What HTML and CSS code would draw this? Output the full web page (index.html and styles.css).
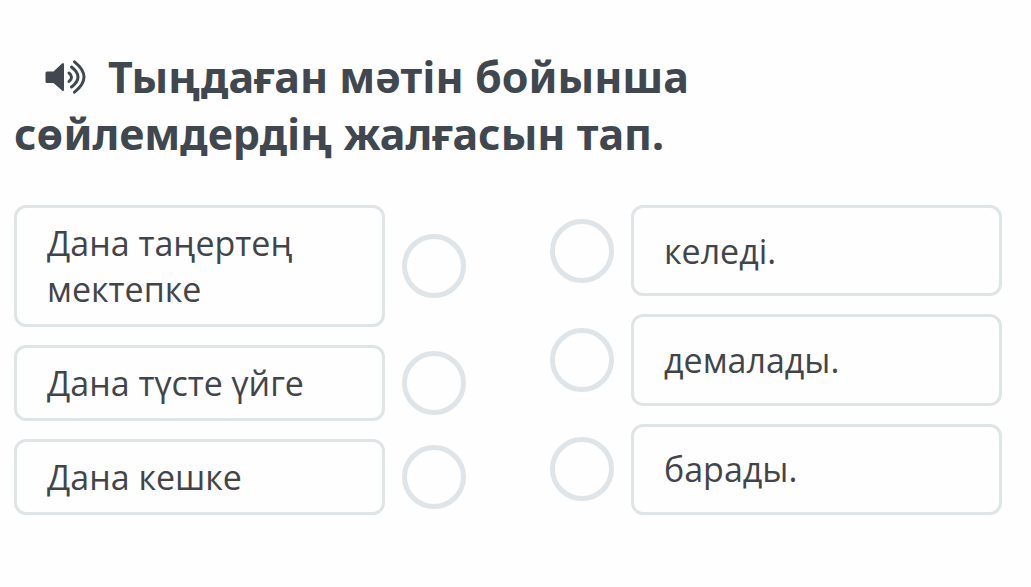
FILE: index.html
```html
<!DOCTYPE html>
<html lang="kk">
<head>
<meta charset="utf-8">
<meta name="viewport" content="width=device-width, initial-scale=1">
<title>Тапсырма</title>
<link rel="stylesheet" href="styles.css">
</head>
<body>
<main class="task">
  <h1 class="task-title"><button class="sound" type="button" aria-label="Тыңдау"><svg class="sound-icon" viewBox="0 0 42 44" aria-hidden="true"><path class="speaker" d="M2 12.500h6.500L17 4.500q2-1.500 2 1v25q0 2.500-2 1L8.500 24H2q-1.500 0-1.500-1.500V14q0-1.500 1.500-1.500z"/><path class="wave" d="M24 14q5 4 0 8.500M26.500 8q13 10 0 20M29.500 2.800q19 15.200 0 30.400"/></svg></button>Тыңдаған мәтін бойынша сөйлемдердің жалғасын тап.</h1>
  <div class="match">
    <ul class="column">
      <li class="row"><div class="card">Дана таңертең мектепке</div><button class="dot" type="button" aria-label="Дана таңертең мектепке"></button></li>
      <li class="row"><div class="card">Дана түсте үйге</div><button class="dot" type="button" aria-label="Дана түсте үйге"></button></li>
      <li class="row"><div class="card">Дана кешке</div><button class="dot" type="button" aria-label="Дана кешке"></button></li>
    </ul>
    <ul class="column">
      <li class="row"><button class="dot" type="button" aria-label="келеді"></button><div class="card">келеді.</div></li>
      <li class="row"><button class="dot" type="button" aria-label="демалады"></button><div class="card">демалады.</div></li>
      <li class="row"><button class="dot" type="button" aria-label="барады"></button><div class="card">барады.</div></li>
    </ul>
  </div>
</main>
</body>
</html>
```
FILE: styles.css
```css
* {
  box-sizing: border-box;
}

body {
  margin: 0;
  background: #fefefe;
  color: #414549;
  font-family: "Open Sans", "Noto Sans", sans-serif;
}

.task {
  padding: 48px 29px 48px 14px;
}

.task-title {
  margin: 0 0 43px;
  color: #40474f;
  font-family: "Noto Sans", "Open Sans", sans-serif;
  font-size: 43px;
  font-weight: 700;
  line-height: 57px;
}

.sound {
  margin: 0 21px 0 31px;
  padding: 0;
  border: 0;
  background: none;
  vertical-align: middle;
  line-height: 0;
}

.sound-icon {
  width: 42px;
  height: 44px;
}

.speaker {
  fill: #40474f;
}

.wave {
  fill: none;
  stroke: #40474f;
  stroke-width: 3;
  stroke-linecap: round;
}

.match {
  display: grid;
  grid-template-columns: 1fr 1fr;
  gap: 84px;
}

.column {
  display: flex;
  flex-direction: column;
  gap: 18px;
  margin: 0;
  padding: 0;
  list-style: none;
}

.row {
  display: flex;
  flex: 1 0 auto;
  align-items: center;
  gap: 17px;
}

.card {
  display: flex;
  flex: 1;
  align-items: center;
  align-self: stretch;
  padding: 12px 30px;
  border: 3px solid #dfe4e6;
  border-radius: 12px;
  font-size: 34px;
  line-height: 46px;
}

.dot {
  flex: none;
  width: 64px;
  height: 64px;
  padding: 0;
  border: 5px solid #dfe4e8;
  border-radius: 50%;
  background: none;
}
```
